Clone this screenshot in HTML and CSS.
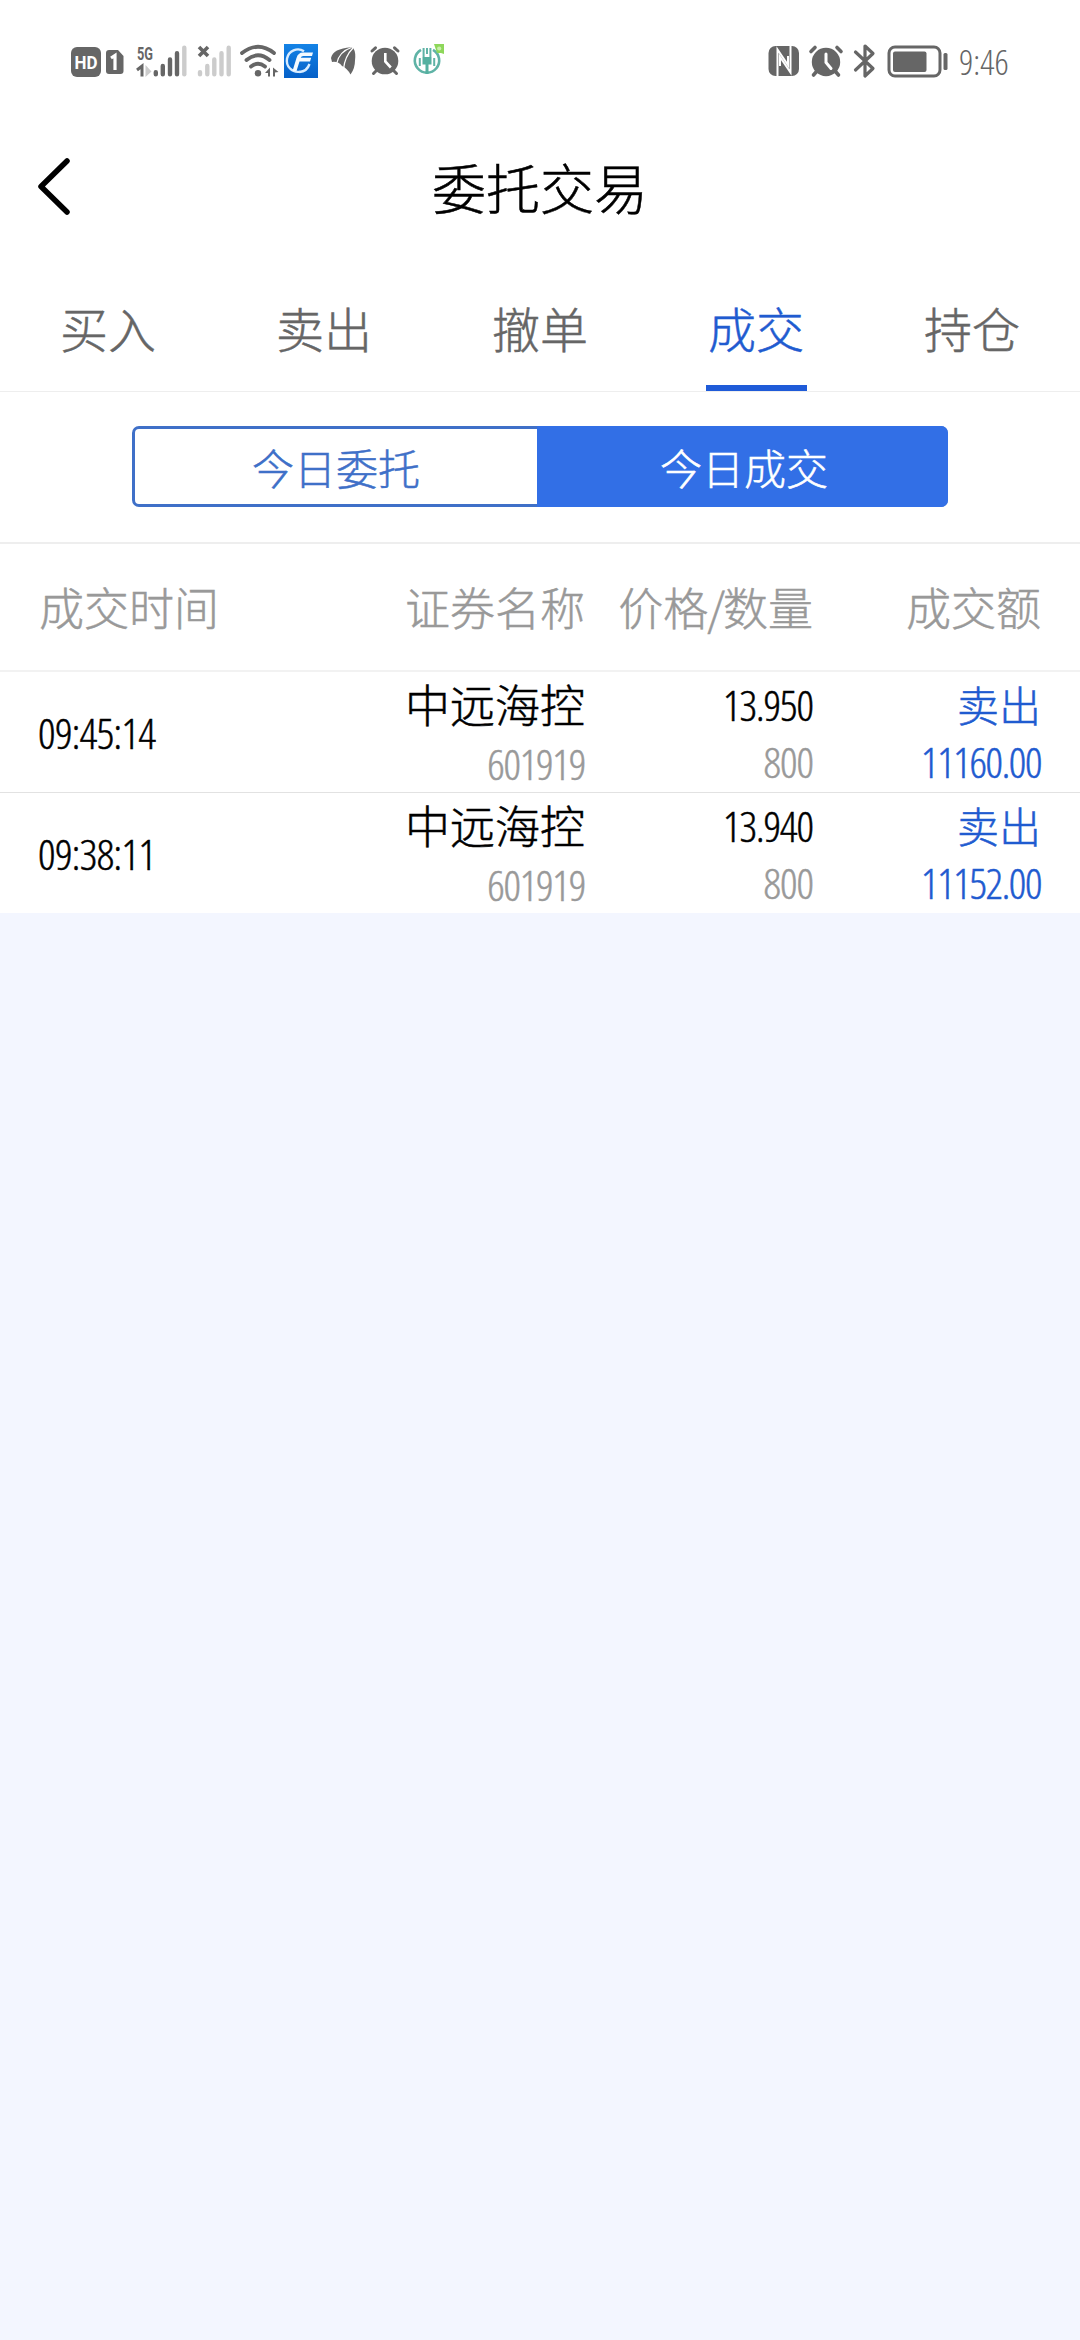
FILE: index.html
```html
<!DOCTYPE html>
<html lang="zh-CN">
<head>
<meta charset="utf-8">
<title>委托交易</title>
<link rel="stylesheet" href="styles.css">
</head>
<body>
<div class="statusbar">
  <div class="status-left">
    <svg width="65" height="44" viewBox="68 38 65 44">
      <rect x="71" y="47" width="30" height="30" rx="6" fill="#666"/>
      <text class="icon-text" x="74.500" y="68.700" font-size="19" textLength="23" lengthAdjust="spacingAndGlyphs" fill="#fff">HD</text>
      <path d="M109 50h9l5.500 6v15a3 3 0 0 1-3 3h-11.500a3 3 0 0 1-3-3v-18a3 3 0 0 1 3-3z" fill="#666"/>
      <path d="M111 58l4-2.500v14.500" fill="none" stroke="#fff" stroke-width="3.200"/>
    </svg>
    <svg width="60" height="44" viewBox="133 38 60 44">
      <text class="icon-text" x="137" y="59.500" font-size="18.500" textLength="16" lengthAdjust="spacingAndGlyphs" fill="#666">5G</text>
      <path d="M137 70l5-4v10.500" fill="none" stroke="#666" stroke-width="3"/>
      <path d="M145.500 65v12l6-5.500z" fill="#ccc"/>
      <g stroke="#666" stroke-width="4.400" stroke-linecap="round"><path d="M155.800 72.200v2M162.800 66v8.200M170 59.500v14.700M177 53.200v21"/><path d="M184.300 47.800v26.400" stroke="#ccc"/></g>
    </svg>
    <svg width="43" height="44" viewBox="193 38 43 44">
      <path d="M199 47l9 9m0-9l-9 9" stroke="#666" stroke-width="3.600"/>
      <path d="M200 72.200v2M207.300 66v8.200M214.300 59.500v14.700M221.500 53.200v21M228.700 47.800v26.400" stroke="#ccc" stroke-width="4.400" stroke-linecap="round"/>
    </svg>
    <svg width="44" height="44" viewBox="236 38 44 44">
      <g fill="none" stroke="#666" stroke-width="3.800" stroke-linecap="round"><path d="M242 53Q258 40.500 274 53M246.500 60Q258 50.500 269.500 60M251 66.500Q258 61 265 66.500"/></g>
      <circle cx="258" cy="73.200" r="3.200" fill="#666"/>
      <path d="M270 67.500v9h-2v-3.500h-3zM273 67.500l5.500 4.500-3.500.5v4h-2z" fill="#666"/>
    </svg>
    <svg width="42" height="44" viewBox="280 38 42 44">
      <defs><linearGradient id="blue" x2="0" y2="1"><stop stop-color="#1483e6"/><stop offset="1" stop-color="#0560c8"/></linearGradient></defs>
      <rect x="284" y="44" width="34" height="34" fill="url(#blue)"/>
      <path d="M304 51.200a11.200 11.200 0 1 0-4 20.500" fill="none" stroke="#d8ecff" stroke-width="2.400"/>
      <path d="M313 52.500h-10q-5 0-6.500 5.500l-4 13h4l3-9.500h10.500l1.200-3.800h-10.500q.6-1.800 2.500-1.800h8.800z" fill="#f4faff"/>
      <path d="M309.500 64q-2.500 7.500-10 8" fill="none" stroke="#d8ecff" stroke-width="2.400"/>
    </svg>
    <svg width="44" height="44" viewBox="322 38 44 44">
      <path d="M351 47.200Q333 48.500 331 58l1 4q6-1 10 4 5 2 8.500 8.500 4.500-6 4.500-14 1-8-1.500-12z" fill="#666"/>
      <path d="M351.500 47.500Q339 51.500 336.500 64M353 48q-8 8-9.500 21" fill="none" stroke="#fff" stroke-width="1.200"/>
    </svg>
    <svg width="44" height="44" viewBox="366 38 44 44">
      <circle cx="385" cy="61" r="13.300" fill="#666"/>
      <path d="M372 51l3.500-3.200M398 51l-3.500-3.200M373.500 73.500l3-3M396.500 73.500l-3-3" stroke="#666" stroke-width="3" stroke-linecap="round"/>
      <path d="M385.300 53v8.500l5.500 6" fill="none" stroke="#fff" stroke-width="2.600"/>
    </svg>
    <svg width="40" height="44" viewBox="410 38 40 44">
      <path d="M421 49.800a12.200 12.200 0 1 0 12 0" fill="none" stroke="#5fb3a6" stroke-width="2.600"/>
      <path d="M422.500 57h9v7.500h-9zM425.500 64h3v10h-3z" fill="#55b0a0"/>
      <path d="M423.600 48v9M430.400 48v9M427 48v6M419.800 58v8M434.200 58v8" fill="none" stroke="#5fb3a6" stroke-width="2"/>
      <path d="M434 44h10v10l-3-1h-4z" fill="#8ed75a"/><circle cx="439.200" cy="48.500" r="2.100" fill="#c9f0ad"/>
    </svg>
  </div>
  <div class="status-right">
    <svg width="40" height="44" viewBox="765 38 40 44">
      <rect x="768.500" y="46" width="30.500" height="30" rx="7" fill="#666"/>
      <path d="M777.500 76.500V49.500l10.500 15.500V56M790.500 45.500v27l-10.500-15.500v9" fill="none" stroke="#fff" stroke-width="2"/>
    </svg>
    <svg width="43" height="44" viewBox="805 38 43 44">
      <circle cx="826" cy="62" r="14.200" fill="#666"/>
      <path d="M811 51.500l4-4M841 51.500l-4-4M813.500 75l3.500-4M838.500 75l-3.500-4" stroke="#666" stroke-width="3.600" stroke-linecap="round"/>
      <path d="M826 54v8.500l5 6" fill="none" stroke="#fff" stroke-width="3" stroke-linecap="round"/>
    </svg>
    <svg width="34" height="44" viewBox="848 38 34 44">
      <path d="M855.500 52l17.500 16.500-8 7.500V46l8 7.500L855.500 70" fill="none" stroke="#666" stroke-width="3.200" stroke-linejoin="round" stroke-linecap="round"/>
    </svg>
    <svg width="72" height="44" viewBox="882 38 72 44">
      <rect x="889" y="47" width="51" height="29" rx="6" fill="none" stroke="#666" stroke-width="3"/>
      <rect x="893" y="51.500" width="33.500" height="20.500" rx="2" fill="#666"/>
      <rect x="943.500" y="53" width="4" height="17" rx="1.500" fill="#666"/>
    </svg>
    <span class="clock">9:46</span>
  </div>
</div>
<header class="titlebar">
  <svg class="back" width="40" height="64" viewBox="0 0 40 64"><path d="M33 7L7 32.500 33 58" fill="none" stroke="#000" stroke-width="5.500" stroke-linecap="round" stroke-linejoin="round"/></svg>
  <h1 class="title">委托交易</h1>
</header>
<nav class="tabs">
  <div class="tab"><span class="tab-label">买入</span></div>
  <div class="tab"><span class="tab-label">卖出</span></div>
  <div class="tab"><span class="tab-label">撤单</span></div>
  <div class="tab"><span class="tab-label active">成交</span></div>
  <div class="tab"><span class="tab-label">持仓</span></div>
</nav>
<div class="switch-wrap">
  <div class="switch">
    <div class="option">今日委托</div>
    <div class="option selected">今日成交</div>
  </div>
</div>
<div class="columns head">
  <span>成交时间</span><span>证券名称</span><span>价格<span class="slash">/</span>数量</span><span>成交额</span>
</div>
<div class="columns row">
  <div class="time"><span class="num">09:45:14</span></div>
  <div class="cell name"><span>中远海控</span><span class="num sub">601919</span></div>
  <div class="cell"><span class="num">13.950</span><span class="num sub">800</span></div>
  <div class="cell amount"><span>卖出</span><span class="num">11160.00</span></div>
</div>
<div class="columns row">
  <div class="time"><span class="num">09:38:11</span></div>
  <div class="cell name"><span>中远海控</span><span class="num sub">601919</span></div>
  <div class="cell"><span class="num">13.940</span><span class="num sub">800</span></div>
  <div class="cell amount"><span>卖出</span><span class="num">11152.00</span></div>
</div>
</body>
</html>
```
FILE: styles.css
```css
* { box-sizing: border-box; }
body {
  margin: 0;
  min-height: 2340px;
  background: #f3f6ff;
  font-family: "Noto Sans CJK SC", sans-serif;
  font-weight: 300;
  -webkit-text-stroke: .5px currentColor;
  color: #000;
}
svg { display: block; flex: none; -webkit-text-stroke: 0; }
.statusbar {
  height: 120px;
  padding: 38px 70px 0 68px;
  display: flex;
  justify-content: space-between;
  align-items: flex-start;
  background: #fff;
}
.status-left, .status-right { display: flex; height: 44px; align-items: center; }
.icon-text { font-family: Roboto, sans-serif; font-weight: 700; }
.clock {
  width: 56px;
  padding: 3px 0 0 5px;
  font-family: "Open Sans", sans-serif;
  font-stretch: 75%;
  font-size: 35px;
  line-height: 44px;
  color: #666;
  white-space: nowrap;
  -webkit-text-stroke: 0;
}
.titlebar {
  height: 150px;
  padding: 0 34px;
  display: grid;
  grid-template-columns: 40px 1fr 40px;
  align-items: start;
  background: #fff;
}
.back { margin-top: 34px; }
.title {
  margin: 27px 0 0;
  font-size: 54px;
  font-weight: 300;
  line-height: 80px;
  text-align: center;
}
.tabs {
  height: 122px;
  display: flex;
  background: #fff;
  border-bottom: 1px solid #eee;
}
.tab { flex: 1; display: flex; justify-content: center; }
.tab-label {
  width: 101px;
  font-size: 48px;
  line-height: 114px;
  text-align: center;
  color: #666;
}
.tab-label.active { color: #1f5bd0; border-bottom: 6px solid #1f5bd8; }
.switch-wrap {
  height: 152px;
  padding: 34px 132px 0;
  background: #fff;
  border-bottom: 2px solid #eee;
}
.switch {
  height: 81px;
  display: flex;
  border: 3px solid #3f70c8;
  border-radius: 7px;
  background: #fff;
}
.option {
  width: 402px;
  flex: none;
  font-size: 42px;
  line-height: 75px;
  text-align: center;
  color: #3f70c8;
}
.option.selected {
  width: 411px;
  margin: -3px -3px -3px 0;
  padding: 3px 0 0 3px;
  border-radius: 0 7px 7px 0;
  background: #326fe6;
  color: #fff;
}
.columns {
  padding: 0 39px;
  display: grid;
  grid-template-columns: 273px 273px 228px 228px;
  background: #fff;
  text-align: right;
  white-space: nowrap;
}
.head {
  height: 128px;
  font-size: 45px;
  line-height: 125px;
  color: #999;
  border-bottom: 2px solid #f2f2f2;
}
.head > :first-child { text-align: left; }
.slash { margin: 0 -2px 0 -1px; }
.row { height: 121px; border-bottom: 1px solid #e2e2e2; }
.row:last-child { height: 120px; border-bottom: 0; }
.num {
  font-family: "Open Sans", sans-serif;
  font-size: 43px;
  font-stretch: 75%;
  letter-spacing: -1px;
}
.time { text-align: left; line-height: 122px; }
.time .num { margin-left: -1px; letter-spacing: -.6px; }
.cell {
  display: flex;
  flex-direction: column;
  align-items: flex-end;
  padding-top: 4px;
  font-size: 42px;
  line-height: 57px;
}
.name { padding-top: 2px; font-size: 45px; line-height: 60px; }
.name .num { letter-spacing: -1.200px; }
.sub { color: #999; }
.amount { padding-top: 3px; line-height: 58px; color: #1f5bd0; }
.amount .num { line-height: 57px; letter-spacing: -1.400px; }
```
